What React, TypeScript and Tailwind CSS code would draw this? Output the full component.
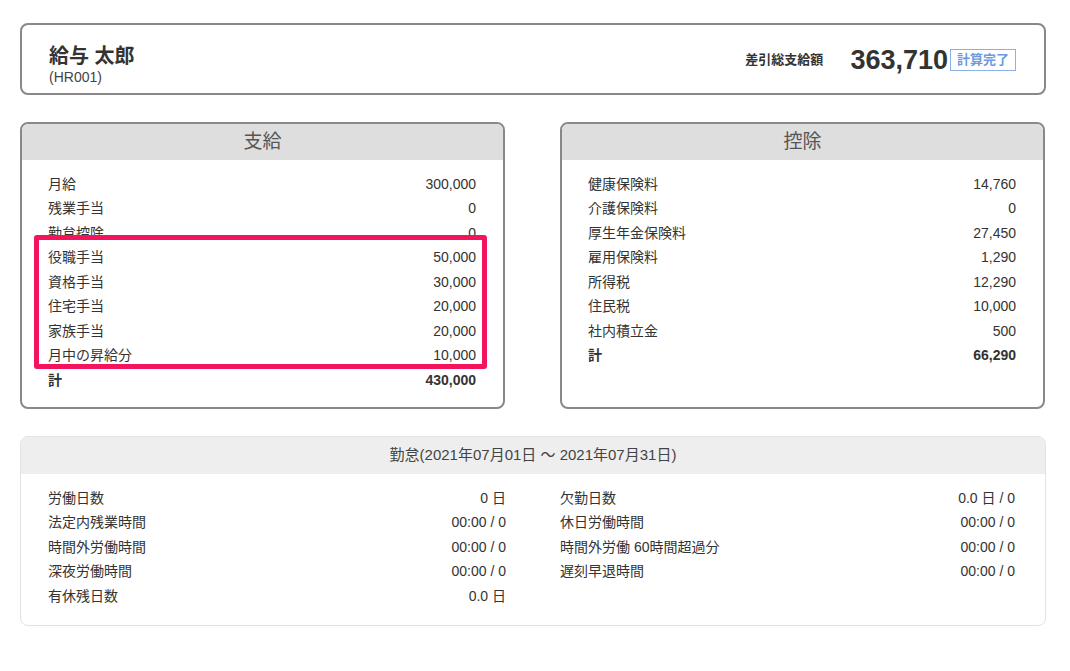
const font = { fontFamily: '"Liberation Sans", "Noto Sans CJK JP", sans-serif' };

type Row = [string, string];

const payments: Row[] = [
    ["月給", "300,000"],
    ["残業手当", "0"],
    ["勤怠控除", "0"],
    ["役職手当", "50,000"],
    ["資格手当", "30,000"],
    ["住宅手当", "20,000"],
    ["家族手当", "20,000"],
    ["月中の昇給分", "10,000"],
];

const deductions: Row[] = [
    ["健康保険料", "14,760"],
    ["介護保険料", "0"],
    ["厚生年金保険料", "27,450"],
    ["雇用保険料", "1,290"],
    ["所得税", "12,290"],
    ["住民税", "10,000"],
    ["社内積立金", "500"],
];

const attLeft: Row[] = [
    ["労働日数", "0 日"],
    ["法定内残業時間", "00:00 / 0"],
    ["時間外労働時間", "00:00 / 0"],
    ["深夜労働時間", "00:00 / 0"],
    ["有休残日数", "0.0 日"],
];

const attRight: Row[] = [
    ["欠勤日数", "0.0 日 / 0"],
    ["休日労働時間", "00:00 / 0"],
    ["時間外労働 60時間超過分", "00:00 / 0"],
    ["遅刻早退時間", "00:00 / 0"],
];

function Rows({ rows, total }: { rows: Row[]; total?: string }) {
    return (
        <div>
            {rows.map(([k, v]) => (
                <div key={k} className="flex justify-between h-[24.5px] items-center">
                    <span>{k}</span>
                    <span>{v}</span>
                </div>
            ))}
            {total && (
                <div className="flex justify-between h-[24.5px] items-center font-bold">
                    <span>計</span>
                    <span>{total}</span>
                </div>
            )}
        </div>
    );
}

function Panel({ title, children }: { title: string; children: React.ReactNode }) {
    return (
        <div className="relative w-[485px] h-[287px] border-2 border-[#888] rounded-lg overflow-hidden bg-white">
            <div className="h-[36px] bg-[#dedede] flex items-center justify-center text-[19px] text-[#555]">
                {title}
            </div>
            <div className="pl-[26px] pr-[27px] pt-[12px] text-[14px] text-[#333]">{children}</div>
        </div>
    );
}

export default function App() {
    return (
        <div style={font} className="w-[1070px] h-[671px] bg-white pt-[23px] pl-[20px]">
            <div className="w-[1026px] h-[72px] border-2 border-[#888] rounded-lg flex items-center justify-between pl-[27px] pr-[28px]">
                <div className="text-[#333] mt-[12px]">
                    <div className="text-[20px] font-bold leading-[24px]">給与 太郎</div>
                    <div className="text-[14px] leading-[18px] text-[#444]">(HR001)</div>
                </div>
                <div className="flex items-center text-[#333] mt-[2px]">
                    <span className="text-[13px] font-bold mr-[27px]">差引総支給額</span>
                    <span className="text-[27px] font-bold">363,710</span>
                    <span className="ml-[2px] border border-[#8ab0e6] text-[#6d9be0] text-[13px] font-bold px-[6px] leading-[20px]">
                        計算完了
                    </span>
                </div>
            </div>

            <div className="flex gap-[55px] mt-[27px] w-[1026px]">
                <div className="relative">
                    <Panel title="支給">
                        <Rows rows={payments} total="430,000" />
                    </Panel>
                    <div className="absolute left-[14px] top-[113px] w-[453px] h-[134px] border-[5px] border-[#f2145c] rounded-[3px]" />
                </div>
                <Panel title="控除">
                    <Rows rows={deductions} total="66,290" />
                </Panel>
            </div>

            <div className="mt-[27px] w-[1026px] h-[190px] border border-[#e2e2e2] rounded-lg overflow-hidden">
                <div className="h-[37px] bg-[#eee] flex items-center justify-center text-[15px] text-[#444]">
                    勤怠(2021年07月01日 ～ 2021年07月31日)
                </div>
                <div className="flex pt-[12px] text-[14px] text-[#333]">
                    <div className="pl-[27px] w-[485px] shrink-0">
                        <Rows rows={attLeft} />
                    </div>
                    <div className="pl-[54px] w-[509px] shrink-0">
                        <Rows rows={attRight} />
                    </div>
                </div>
            </div>
        </div>
    );
}
